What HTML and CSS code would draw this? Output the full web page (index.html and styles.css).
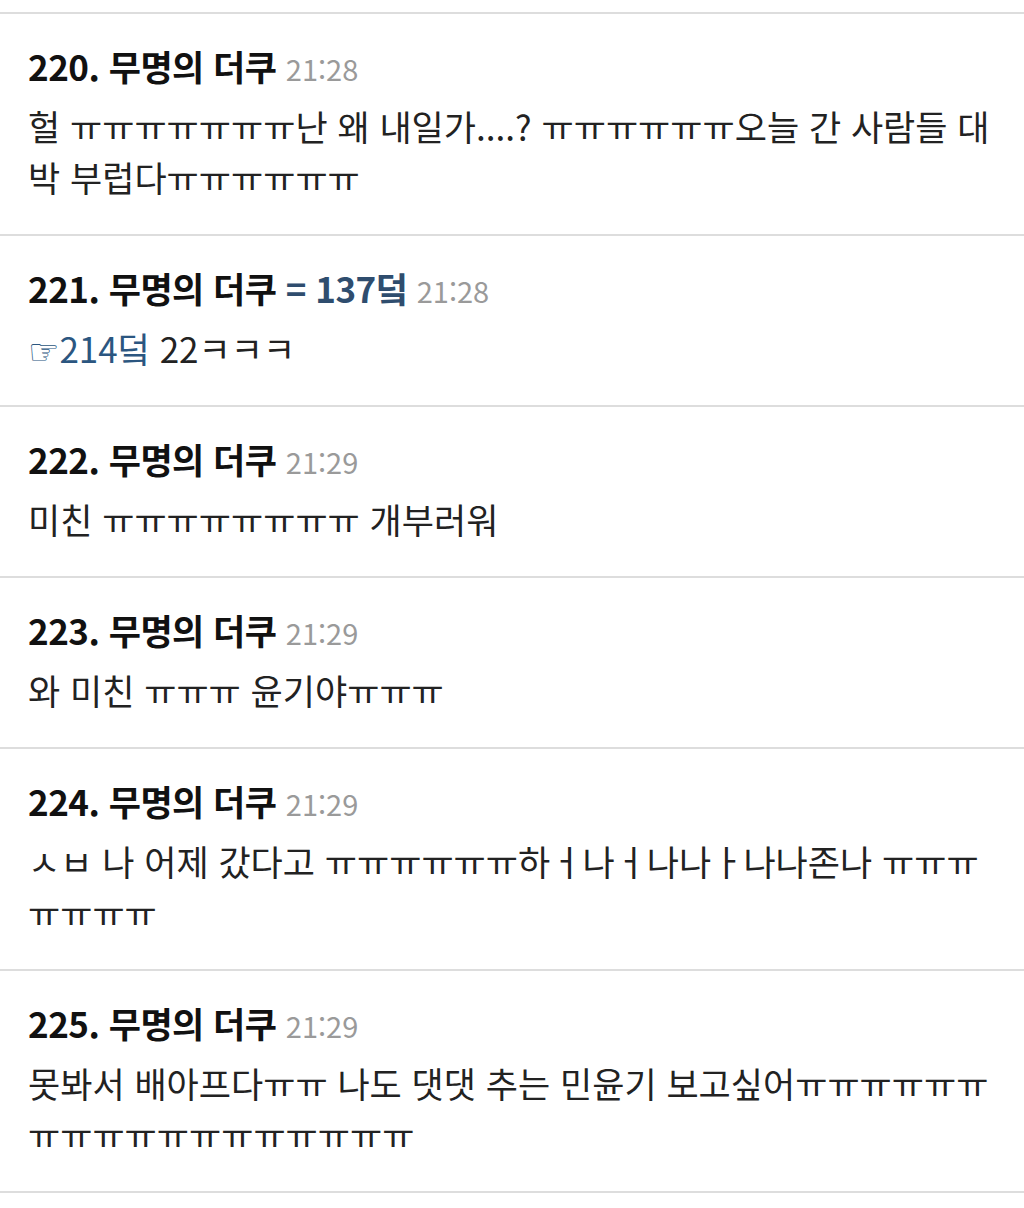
FILE: index.html
```html
<!DOCTYPE html>
<html lang="ko">
<head>
<meta charset="utf-8">
<title>댓글</title>
<link rel="stylesheet" href="styles.css">
</head>
<body>
<div class="list">
  <div class="post">
    <div class="head"><span class="num">220.</span> <span class="name">무명의 더쿠</span> <span class="time">21:28</span></div>
    <div class="body">헐 ㅠㅠㅠㅠㅠㅠㅠ난 왜 내일가....? ㅠㅠㅠㅠㅠㅠ오늘 간 사람들 대박 부럽다ㅠㅠㅠㅠㅠㅠ</div>
  </div>
  <div class="post">
    <div class="head"><span class="num">221.</span> <span class="name">무명의 더쿠</span> <span class="ref">= 137덬</span> <span class="time">21:28</span></div>
    <div class="body"><span class="anchor"><span class="hand">☞</span>214덬</span> 22ㅋㅋㅋ</div>
  </div>
  <div class="post">
    <div class="head"><span class="num">222.</span> <span class="name">무명의 더쿠</span> <span class="time">21:29</span></div>
    <div class="body">미친 ㅠㅠㅠㅠㅠㅠㅠㅠ 개부러워</div>
  </div>
  <div class="post">
    <div class="head"><span class="num">223.</span> <span class="name">무명의 더쿠</span> <span class="time">21:29</span></div>
    <div class="body">와 미친 ㅠㅠㅠ 윤기야ㅠㅠㅠ</div>
  </div>
  <div class="post">
    <div class="head"><span class="num">224.</span> <span class="name">무명의 더쿠</span> <span class="time">21:29</span></div>
    <div class="body">ㅅㅂ 나 어제 갔다고 ㅠㅠㅠㅠㅠㅠ하ㅓ나ㅓ나나ㅏ나나존나 ㅠㅠㅠㅠㅠㅠㅠ</div>
  </div>
  <div class="post last">
    <div class="head"><span class="num">225.</span> <span class="name">무명의 더쿠</span> <span class="time">21:29</span></div>
    <div class="body">못봐서 배아프다ㅠㅠ 나도 댓댓 추는 민윤기 보고싶어ㅠㅠㅠㅠㅠㅠㅠㅠㅠㅠㅠㅠㅠㅠㅠㅠㅠㅠ</div>
  </div>
</div>
</body>
</html>
```

FILE: styles.css
```css
html, body {
  margin: 0;
  padding: 0;
  background: #fff;
}

body {
  font-family: "Noto Sans CJK KR", "Noto Sans", sans-serif;
  color: #222;
}

.list {
  padding-top: 12px;
}

.post {
  border-top: 2px solid #dddddd;
  padding: 28px 28px 32px 28px;
}

.post.last {
  border-bottom: 2px solid #dddddd;
}

.head {
  font-size: 35px;
  line-height: 48px;
  height: 48px;
  font-weight: 700;
  color: #111;
  white-space: nowrap;
  letter-spacing: -0.5px;
}

.ref {
  color: #2f4d6e;
}

.time {
  font-size: 29px;
  font-weight: 400;
  color: #9a9a9a;
  letter-spacing: 0;
}

.body {
  margin-top: 10px;
  font-size: 35px;
  line-height: 51px;
}

.anchor {
  color: #2b5680;
}

.hand {
  font-family: "DejaVu Sans", sans-serif;
  font-size: 35px;
  line-height: 1;
  vertical-align: -1px;
}
```
